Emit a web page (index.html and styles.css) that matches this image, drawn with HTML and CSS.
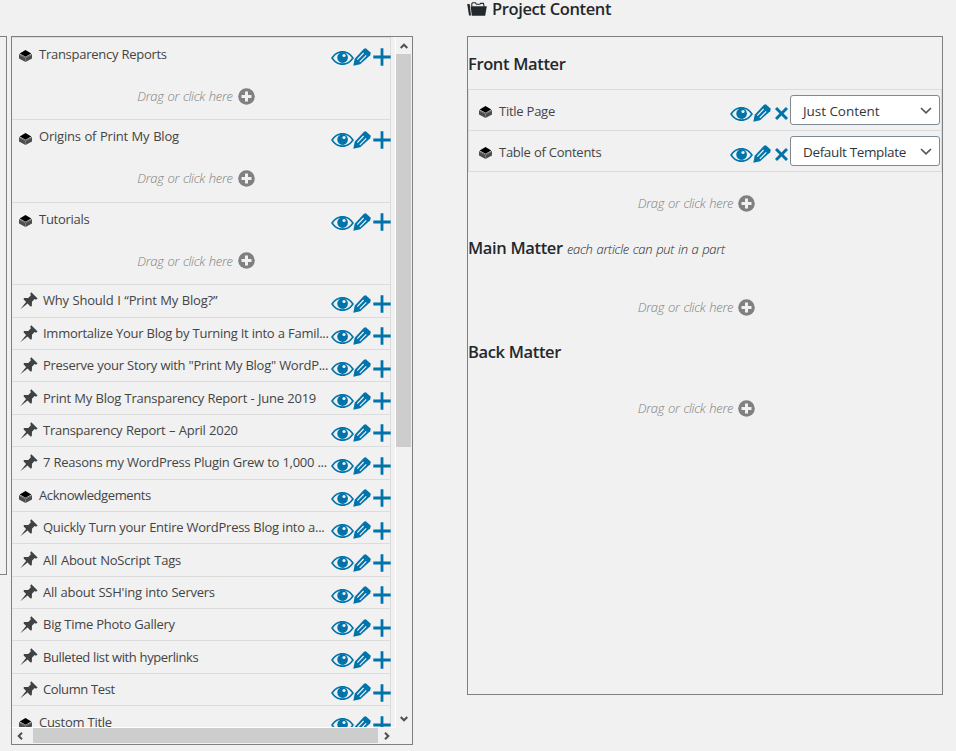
FILE: index.html
```
<!DOCTYPE html>
<html lang="en">
<head>
<meta charset="utf-8">
<title>Project Content</title>
<link rel="stylesheet" href="styles.css">
</head>
<body>
<svg class="defs" aria-hidden="true">
  <symbol id="eye" viewBox="0 0 23 14"><path d="M0 7C3 2.600 7 0 11.500 0S20 2.600 23 7C20 11.400 16 14 11.500 14S3 11.400 0 7ZM2.100 7c2 3.400 5.400 5.300 9.400 5.300s7.400-1.900 9.400-5.300C18.900 3.600 15.500 1.700 11.500 1.700S4.100 3.600 2.100 7Z" fill-rule="evenodd"/><circle cx="11.600" cy="6.600" r="5.300"/><circle class="glint" cx="13" cy="4.500" r="1.600"/></symbol>
  <symbol id="pencil" viewBox="0 0 18 18"><path d="M12.800.2 17.800 4.800 17.200 7.200 7.200 16.200.3 17.700 1.700 10.800 11 .8Z"/><path class="cut" d="M4.300 11.600 10.600 5M6.800 13.800 13.200 7.400" /></symbol>
  <symbol id="plus" viewBox="0 0 18 18"><path d="M7.600.3h2.800v7.300h7.300v2.800h-7.300v7.300H7.600v-7.300H.3V7.600h7.300Z"/></symbol>
  <symbol id="cross" viewBox="0 0 12 12"><path d="M1.900 0 6 4.200 10.100 0 12 1.900 7.900 6 12 10.100 10.100 12 6 7.800 1.900 12 0 10.100 4.100 6 0 1.900Z"/></symbol>
  <symbol id="circle" viewBox="0 0 17 17"><circle cx="8.500" cy="8.500" r="8.300"/><path class="glint" d="M7 3.500h3V7h3.500v3H10v3.500H7V10H3.500V7H7Z"/></symbol>
  <symbol id="pin" viewBox="0 0 18 18"><path d="M11.300.3 17.600 6.500 16 7.700 14.600 7.100 12 9.700 11.800 14.300 10.400 14.400 7.600 11.400.3 17.300 6.100 10 3.700 7.600 3.800 6.100 8.300 5.900 10.900 3.300 10.200 1.700Z"/></symbol>
  <symbol id="box" viewBox="0 0 13 12"><path d="M0 3.900 6.500 7 13 3.900V8.600L6.500 12 0 8.600Z" fill="#4c4c4c"/><path d="M6.500 0 12.300 3.400 6.500 6.800.7 3.400Z" fill="#000"/><path d="M.3 4.600 6.500 8 12.700 4.600M6.500 8V12" fill="none" stroke="#999" stroke-width=".6"/></symbol>
  <symbol id="folder" viewBox="0 0 20 14"><path d="M.2 2H2.700L4 13.600H2Z"/><path d="M4.800 4.500V1.800L5.600.7H8.400L9.400 2.300H13L13.600 1.400H16.500L17 4.500" fill="none" stroke="currentColor" stroke-width="1.100"/><path d="M3.700 4.200H19.800L18.200 13.800H4.800Z"/></symbol>
  <symbol id="chev" viewBox="0 0 12 7"><path d="M1 1 6 5.800 11 1" fill="none" stroke="#50575e" stroke-width="1.700"/></symbol>
  <symbol id="arrow" viewBox="0 0 8 6"><path d="M.7 5 4 1.700 7.300 5" fill="none" stroke="#505050" stroke-width="2"/></symbol>
</svg>
<div class="layout">
  <aside class="edge"></aside>
  <section class="panel available">
    <div class="viewport">
      <ul class="list">
        <li class="row big"><div class="head"><svg class="box"><use href="#box"/></svg><span class="name">Transparency Reports</span><svg class="eye"><use href="#eye"/></svg><svg class="pencil"><use href="#pencil"/></svg><svg class="plus"><use href="#plus"/></svg></div><div class="drop"><span>Drag or click here</span><svg><use href="#circle"/></svg></div></li>
        <li class="row big"><div class="head"><svg class="box"><use href="#box"/></svg><span class="name wide">Origins of Print My Blog</span><svg class="eye"><use href="#eye"/></svg><svg class="pencil"><use href="#pencil"/></svg><svg class="plus"><use href="#plus"/></svg></div><div class="drop"><span>Drag or click here</span><svg><use href="#circle"/></svg></div></li>
        <li class="row big"><div class="head"><svg class="box"><use href="#box"/></svg><span class="name">Tutorials</span><svg class="eye"><use href="#eye"/></svg><svg class="pencil"><use href="#pencil"/></svg><svg class="plus"><use href="#plus"/></svg></div><div class="drop"><span>Drag or click here</span><svg><use href="#circle"/></svg></div></li>
        <li class="row"><div class="head"><svg class="pin"><use href="#pin"/></svg><span class="name wide">Why Should I “Print My Blog?”</span><svg class="eye"><use href="#eye"/></svg><svg class="pencil"><use href="#pencil"/></svg><svg class="plus"><use href="#plus"/></svg></div></li>
        <li class="row"><div class="head"><svg class="pin"><use href="#pin"/></svg><span class="name">Immortalize Your Blog by Turning It into a Famil...</span><svg class="eye"><use href="#eye"/></svg><svg class="pencil"><use href="#pencil"/></svg><svg class="plus"><use href="#plus"/></svg></div></li>
        <li class="row"><div class="head"><svg class="pin"><use href="#pin"/></svg><span class="name">Preserve your Story with "Print My Blog" WordP...</span><svg class="eye"><use href="#eye"/></svg><svg class="pencil"><use href="#pencil"/></svg><svg class="plus"><use href="#plus"/></svg></div></li>
        <li class="row"><div class="head"><svg class="pin"><use href="#pin"/></svg><span class="name mid">Print My Blog Transparency Report - June 2019</span><svg class="eye"><use href="#eye"/></svg><svg class="pencil"><use href="#pencil"/></svg><svg class="plus"><use href="#plus"/></svg></div></li>
        <li class="row"><div class="head"><svg class="pin"><use href="#pin"/></svg><span class="name mid">Transparency Report – April 2020</span><svg class="eye"><use href="#eye"/></svg><svg class="pencil"><use href="#pencil"/></svg><svg class="plus"><use href="#plus"/></svg></div></li>
        <li class="row"><div class="head"><svg class="pin"><use href="#pin"/></svg><span class="name">7 Reasons my WordPress Plugin Grew to 1,000 ...</span><svg class="eye"><use href="#eye"/></svg><svg class="pencil"><use href="#pencil"/></svg><svg class="plus"><use href="#plus"/></svg></div></li>
        <li class="row"><div class="head"><svg class="box"><use href="#box"/></svg><span class="name tight">Acknowledgements</span><svg class="eye"><use href="#eye"/></svg><svg class="pencil"><use href="#pencil"/></svg><svg class="plus"><use href="#plus"/></svg></div></li>
        <li class="row"><div class="head"><svg class="pin"><use href="#pin"/></svg><span class="name">Quickly Turn your Entire WordPress Blog into a...</span><svg class="eye"><use href="#eye"/></svg><svg class="pencil"><use href="#pencil"/></svg><svg class="plus"><use href="#plus"/></svg></div></li>
        <li class="row"><div class="head"><svg class="pin"><use href="#pin"/></svg><span class="name wide">All About NoScript Tags</span><svg class="eye"><use href="#eye"/></svg><svg class="pencil"><use href="#pencil"/></svg><svg class="plus"><use href="#plus"/></svg></div></li>
        <li class="row"><div class="head"><svg class="pin"><use href="#pin"/></svg><span class="name mid">All about SSH'ing into Servers</span><svg class="eye"><use href="#eye"/></svg><svg class="pencil"><use href="#pencil"/></svg><svg class="plus"><use href="#plus"/></svg></div></li>
        <li class="row"><div class="head"><svg class="pin"><use href="#pin"/></svg><span class="name">Big Time Photo Gallery</span><svg class="eye"><use href="#eye"/></svg><svg class="pencil"><use href="#pencil"/></svg><svg class="plus"><use href="#plus"/></svg></div></li>
        <li class="row"><div class="head"><svg class="pin"><use href="#pin"/></svg><span class="name tight">Bulleted list with hyperlinks</span><svg class="eye"><use href="#eye"/></svg><svg class="pencil"><use href="#pencil"/></svg><svg class="plus"><use href="#plus"/></svg></div></li>
        <li class="row"><div class="head"><svg class="pin"><use href="#pin"/></svg><span class="name tight">Column Test</span><svg class="eye"><use href="#eye"/></svg><svg class="pencil"><use href="#pencil"/></svg><svg class="plus"><use href="#plus"/></svg></div></li>
        <li class="row"><div class="head"><svg class="box"><use href="#box"/></svg><span class="name">Custom Title</span><svg class="eye"><use href="#eye"/></svg><svg class="pencil"><use href="#pencil"/></svg><svg class="plus"><use href="#plus"/></svg></div></li>
      </ul>
    </div>
    <div class="vbar"><svg><use href="#arrow"/></svg><i></i><svg class="down"><use href="#arrow"/></svg></div>
    <div class="hbar"><svg class="left"><use href="#arrow"/></svg><i></i><svg class="right"><use href="#arrow"/></svg></div>
  </section>
  <main class="project">
    <h2 class="title"><svg><use href="#folder"/></svg><span>Project Content</span></h2>
    <section class="panel content">
      <h3 class="front">Front Matter</h3>
      <ul class="chosen">
        <li><svg class="box"><use href="#box"/></svg><span class="name">Title Page</span><svg class="eye"><use href="#eye"/></svg><svg class="pencil"><use href="#pencil"/></svg><svg class="cross"><use href="#cross"/></svg><span class="select"><span class="just">Just Content</span><svg><use href="#chev"/></svg></span></li>
        <li><svg class="box"><use href="#box"/></svg><span class="name">Table of Contents</span><svg class="eye"><use href="#eye"/></svg><svg class="pencil"><use href="#pencil"/></svg><svg class="cross"><use href="#cross"/></svg><span class="select"><span>Default Template</span><svg><use href="#chev"/></svg></span></li>
      </ul>
      <div class="drop d1"><span>Drag or click here</span><svg><use href="#circle"/></svg></div>
      <h3 class="main">Main Matter <em>each article can put in a part</em></h3>
      <div class="drop d2"><span>Drag or click here</span><svg><use href="#circle"/></svg></div>
      <h3 class="back">Back Matter</h3>
      <div class="drop d3"><span>Drag or click here</span><svg><use href="#circle"/></svg></div>
    </section>
  </main>
</div>
</body>
</html>
```
FILE: styles.css
```
* { box-sizing: border-box; }
body { margin: 0; height: 751px; overflow: hidden; background: #f1f1f1; color: #444; font: 13px/20px "Open Sans", "Noto Sans", sans-serif; }
ul { list-style: none; margin: 0; padding: 0; }
svg { display: block; flex: none; fill: currentColor; }
.defs { position: absolute; width: 0; height: 0; }
.glint { fill: #f1f1f1; }
.cut { fill: none; stroke: #f1f1f1; stroke-width: 1.200; }
.layout { display: flex; align-items: flex-start; }
.panel { border: 1px solid #7e8080; }
.edge { width: 7px; height: 539px; margin: 36px 4px 0 0; border: 1px solid #7e8080; border-left: 0; flex: none; }
.available { width: 402px; height: 709px; margin-top: 36px; flex: none; display: grid; grid-template: 690px 17px / 383px 17px; }
.viewport { overflow: hidden; }
.list { width: 379px; border: 1px solid #dcdcdc; border-left: 0; }
.row { height: 32.4px; border-bottom: 1px solid #dcdcdc; }
.row.big { height: 82.4px; }
.head { display: flex; height: 31.4px; padding: 0 0 0 7px; align-items: flex-start; margin-right: -1px; }
.name { flex: 1; min-width: 0; white-space: nowrap; letter-spacing: -.27px; word-spacing: .2px; padding-top: 5.300px; }
.wide { letter-spacing: -.22px; word-spacing: .6px; }
.mid { letter-spacing: -.25px; word-spacing: .4px; }
.tight { letter-spacing: -.4px; }
.big .head { height: 48px; padding-top: .8px; }
.box { width: 13px; height: 12px; margin: 11.500px 7px 0 0; }
.pin { width: 18px; height: 18px; margin: 7px 5px 0 1px; color: #3f4245; }
.eye { width: 23px; height: 14px; margin: 12px 0 0 0; color: #0073aa; }
.pencil { width: 18px; height: 18px; margin: 9.500px 2px 0 -.5px; color: #0073aa; }
.plus { width: 18px; height: 18px; margin-top: 9.700px; color: #0073aa; }
.drop { display: flex; align-items: center; justify-content: center; gap: 5px; height: 20px; color: #808080; font-style: italic; font-weight: 300; }
.drop span { letter-spacing: -.3px; word-spacing: .7px; }
.drop svg { width: 17px; height: 17px; }
.big .drop { padding-right: 10px; }
.vbar { border-left: 1px solid #fff; display: flex; flex-direction: column; align-items: center; padding-right: 1px; }
.vbar svg { width: 8px; height: 6px; margin: 6px 0 5px; }
.vbar i { width: 15px; height: 393px; background: #cdcdcd; }
.vbar .down { transform: rotate(180deg); margin: auto 0 5px; }
.hbar { border-top: 1px solid #fff; display: flex; align-items: center; padding-bottom: 1px; }
.hbar .left { width: 8px; height: 6px; transform: rotate(-90deg); margin: 0 9px 0 4px; }
.hbar .right { width: 8px; height: 6px; transform: rotate(90deg); margin-left: 5px; }
.hbar i { width: 345px; height: 15px; background: #cdcdcd; flex: none; }
.project { width: 476px; margin-left: 54px; flex: none; }
h2, h3 { margin: 0; color: #23282d; font-size: 16.500px; line-height: 24px; font-weight: 600; letter-spacing: -.38px; word-spacing: .3px; white-space: nowrap; }
.title { display: flex; height: 36px; line-height: 18px; }
.title svg { width: 20px; height: 14px; margin: 2px 5px 0 0; }
.content { height: 659px; padding-top: 15px; }
.chosen { margin-top: 13px; width: 474px; border: 1px solid #dcdcdc; border-bottom: 0; }
.chosen li { display: flex; height: 41px; padding-left: 10px; border-bottom: 1px solid #dcdcdc; }
.chosen .name { padding-top: 11px; }
.chosen .box { margin-top: 16px; }
.chosen .eye { margin-top: 17px; }
.chosen .pencil { margin-top: 14px; margin-right: 4.500px; }
.cross { width: 13px; height: 13px; margin: 17px 2px 0 0; color: #0073aa; }
.select { width: 150px; height: 30px; margin: 5px 1px 0 0; padding: 1px 7px 0 12px; border: 1px solid #7e8993; border-radius: 3px; background: #fff; color: #32373c; display: flex; align-items: center; justify-content: space-between; font-size: 13.500px; letter-spacing: -.35px; white-space: nowrap; }
.select .just { letter-spacing: -.05px; }
.select svg { width: 12px; height: 7px; }
.content .drop { padding-right: 17px; }
.d1 { margin-top: 21px; }
.main { margin-top: 23px; }
.main em { font-weight: 300; font-size: 13px; letter-spacing: -.28px; word-spacing: .7px; color: #23282d; }
.d2 { margin-top: 36px; }
.back { margin-top: 23px; }
.d3 { margin-top: 34px; }
```
